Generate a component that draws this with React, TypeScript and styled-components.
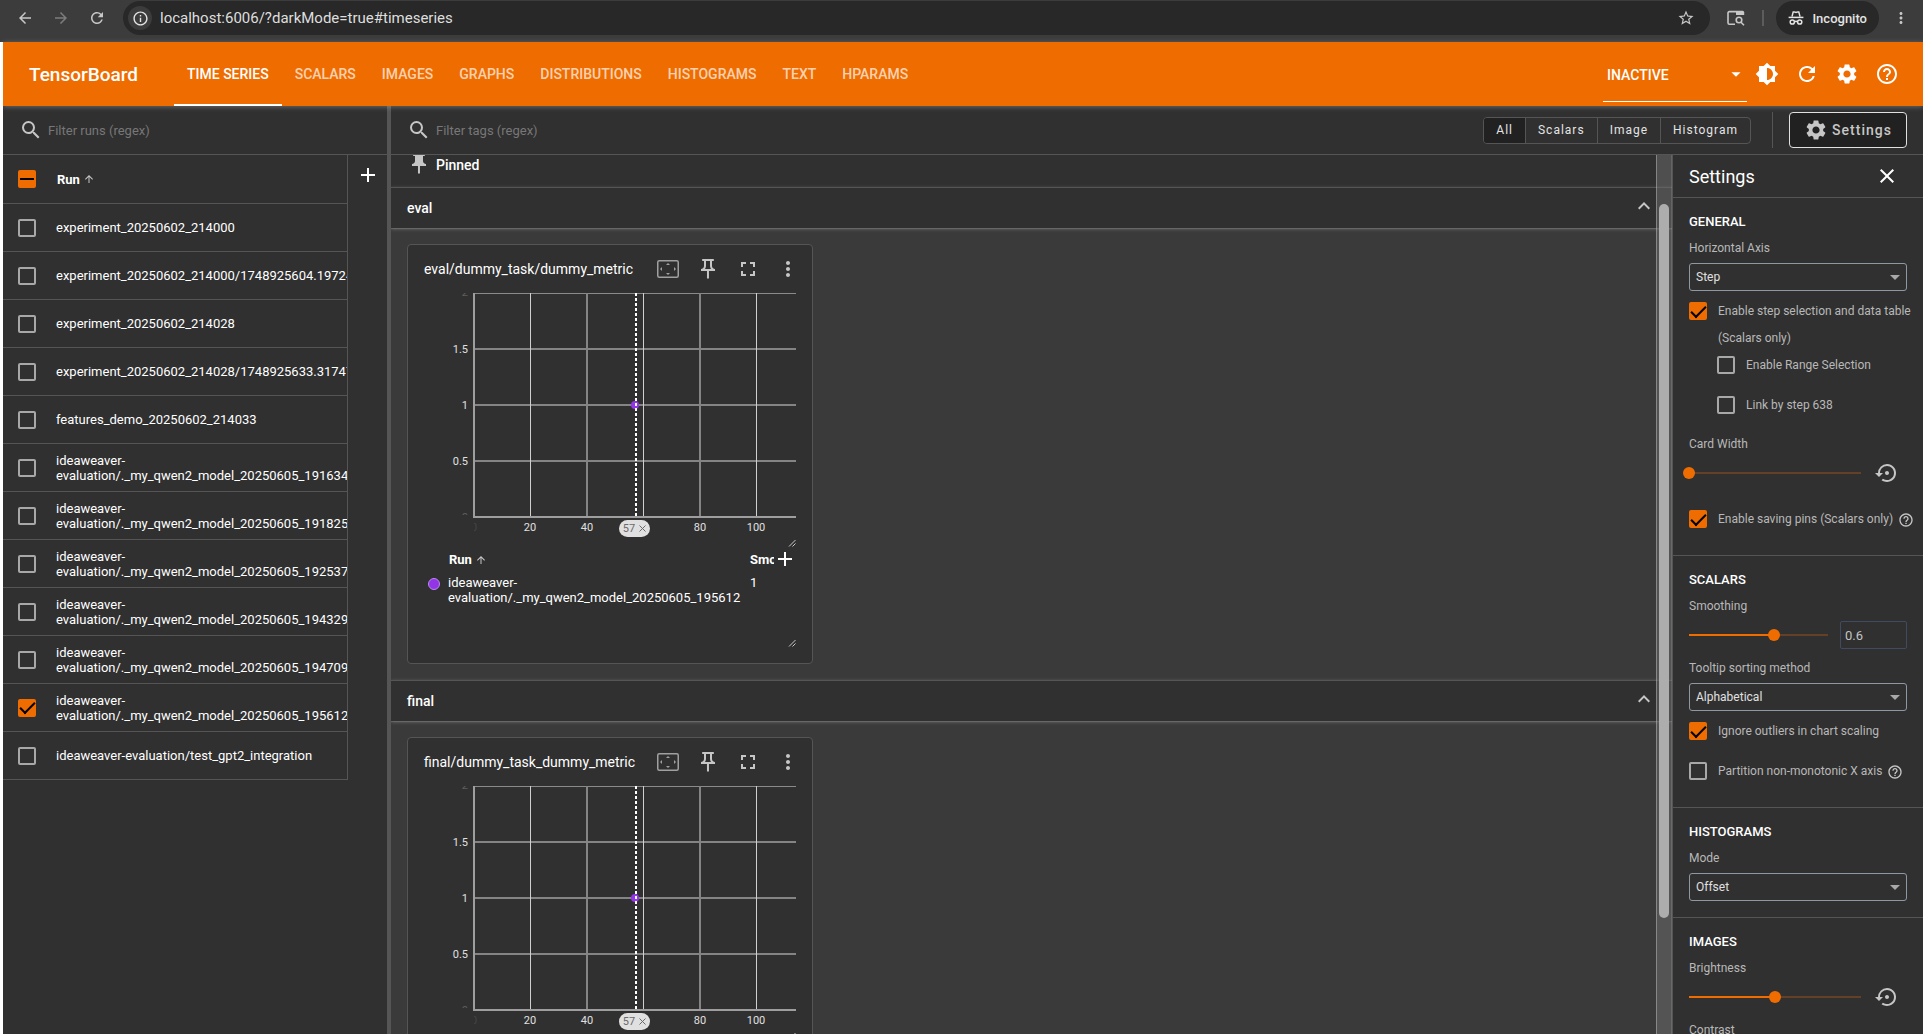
import React, { useEffect, useRef } from "react";
import styled, { createGlobalStyle, css } from "styled-components";
import {
  MdAdd,
  MdArrowBack,
  MdArrowDropDown,
  MdArrowForward,
  MdArrowUpward,
  MdBrightness6,
  MdClose,
  MdExpandLess,
  MdFullscreen,
  MdHelpOutline,
  MdInfoOutline,
  MdMoreVert,
  MdOutlinePushPin,
  MdPushPin,
  MdRefresh,
  MdSearch,
  MdSettings,
  MdSettingsBackupRestore,
  MdStarBorder,
} from "react-icons/md";

const color = {
  orange: "#ef6c00",
  orangeDim: "#634026",
  bg: "#303030",
  content: "#3a3a3a",
  line: "#555555",
  dark: "#212121",
  text: "#ffffff",
  muted: "#b8b8b8",
  icon: "#c6c6c6",
};

const GlobalStyle = createGlobalStyle`
  * { box-sizing: border-box; }
  body {
    margin: 0;
    background: ${color.bg};
    color: ${color.text};
    font-family: Roboto, "Liberation Sans", sans-serif;
    font-size: 13px;
  }
  button, input, select { font-family: inherit; margin: 0; }
`;

const Page = styled.div`
  display: flex;
  flex-direction: column;
  height: 100vh;
  overflow: hidden;
`;

/* ---------- browser bar ---------- */

const BrowserBar = styled.div`
  display: flex;
  align-items: center;
  flex: none;
  height: 42px;
  padding: 0 4px 6px 7px;
  background: #3c3c3c;
`;

const BarButton = styled.button<{ $dim?: boolean }>`
  display: flex;
  align-items: center;
  justify-content: center;
  width: 36px;
  height: 34px;
  padding: 0;
  border: 0;
  background: none;
  color: ${(p) => (p.$dim ? "#7c7c7c" : "#c7c7c7")};
`;

const AddressBox = styled.div`
  display: flex;
  align-items: center;
  flex: 1;
  height: 34px;
  margin: 0 8px;
  padding: 0 15px 0 5px;
  border-radius: 17px;
  background: #282828;
`;

const SiteInfo = styled.button`
  display: flex;
  align-items: center;
  justify-content: center;
  width: 24px;
  height: 24px;
  padding: 0;
  border: 0;
  border-radius: 50%;
  background: #3c3c3c;
  color: #e3e3e3;
`;

const Address = styled.input`
  flex: 1;
  padding: 0 8px;
  border: 0;
  outline: 0;
  background: none;
  color: #dedede;
  font-size: 15px;
`;

const BarRule = styled.span`
  width: 2px;
  height: 16px;
  margin: 0 12px 0 8px;
  background: #5c5c5c;
`;

const IncognitoChip = styled.button`
  display: flex;
  align-items: center;
  gap: 8px;
  height: 34px;
  margin-right: 4px;
  padding: 0 12px;
  border: 0;
  border-radius: 17px;
  background: #282828;
  color: #e3e3e3;
  font-size: 13px;
  font-weight: 500;
`;

/* ---------- app header ---------- */

const Shell = styled.div`
  display: flex;
  flex-direction: column;
  flex: 1;
  min-height: 0;
  border-left: 3px solid #ffffff;
`;

const Header = styled.header`
  position: relative;
  z-index: 2;
  display: flex;
  align-items: center;
  flex: none;
  height: 64px;
  padding: 0 16px 0 26px;
  background: ${color.orange};
  box-shadow: 0 1px 5px rgba(255, 255, 255, 0.28);
`;

const Brand = styled.h1`
  margin: 0 36px 0 0;
  font-size: 19px;
  font-weight: 500;
`;

const Tabs = styled.nav`
  display: flex;
  flex: 1;
  height: 100%;
`;

const Tab = styled.a<{ $active?: boolean }>`
  display: flex;
  align-items: center;
  padding: 0 13px;
  border-top: 2px solid transparent;
  border-bottom: 2px solid ${(p) => (p.$active ? "#ffffff" : "transparent")};
  color: ${(p) => (p.$active ? "#ffffff" : "rgba(255, 255, 255, 0.7)")};
  font-size: 14px;
  font-weight: 500;
  text-decoration: none;
  text-transform: uppercase;
`;

const SelectWrap = styled.div`
  display: grid;
  align-items: center;
  & > * { grid-area: 1 / 1; }
  & > svg { justify-self: end; pointer-events: none; }
`;

const InactiveSelect = styled.select`
  appearance: none;
  width: 144px;
  height: 56px;
  padding: 2px 24px 0 4px;
  border: 0;
  border-bottom: 1px solid #ffffff;
  background: none;
  color: #ffffff;
  font-size: 14px;
  font-weight: 500;
`;

const HeaderSelectWrap = styled(SelectWrap)`
  align-self: flex-end;
  padding-bottom: 4px;
`;

const IconButton = styled.button<{ $tint?: string }>`
  display: flex;
  align-items: center;
  justify-content: center;
  flex: none;
  width: 40px;
  height: 40px;
  padding: 0;
  border: 0;
  background: none;
  color: ${(p) => p.$tint || "#ffffff"};
`;

/* ---------- body ---------- */

const Body = styled.div`
  display: flex;
  flex: 1;
  min-height: 0;
`;

const Sidebar = styled.aside`
  display: flex;
  flex-direction: column;
  flex: none;
  width: 384px;
`;

const Divider = styled.div`
  flex: none;
  width: 4px;
  background: ${color.line};
`;

const FilterBar = styled.div`
  display: flex;
  align-items: center;
  flex: none;
  height: 49px;
  padding: 0 16px;
  border-bottom: 1px solid ${color.line};
  color: ${color.icon};
`;

const FilterInput = styled.input`
  flex: 1;
  min-width: 0;
  padding: 0 5px;
  border: 0;
  outline: 0;
  background: none;
  color: #ffffff;
  font-size: 13px;
  &::placeholder { color: #777777; opacity: 1; }
`;

const SidebarContent = styled.div`
  display: flex;
  align-items: flex-start;
`;

const RunTable = styled.table`
  flex: 1;
  table-layout: fixed;
  width: 0;
  border-collapse: separate;
  border-spacing: 0;
  border-right: 1px solid ${color.line};
  line-height: 15px;
  th, td {
    height: 48px;
    padding: 0;
    border-bottom: 1px solid ${color.line};
    text-align: left;
    overflow: hidden;
  }
  th { height: 49px; }
  th:first-child, td:first-child { width: 53px; padding-left: 15px; }
`;

const AddRunColumn = styled(IconButton)`
  width: 39px;
`;

const SortHead = styled.span`
  display: flex;
  align-items: center;
  gap: 3px;
  padding-left: 1px;
  font-weight: 700;
  svg { color: ${color.icon}; }
`;

const Check = styled.input`
  appearance: none;
  display: grid;
  place-items: center;
  flex: none;
  width: 18px;
  height: 18px;
  margin: 0;
  border: 2px solid #a8a8a8;
  border-radius: 2px;
  &:checked, &:indeterminate {
    border-color: ${color.orange};
    background: ${color.orange};
  }
  &:checked::after {
    content: "";
    width: 13px;
    height: 6px;
    margin-top: -3px;
    border: solid #000000;
    border-width: 0 0 2px 2px;
    transform: rotate(-45deg);
  }
  &:indeterminate::after {
    content: "";
    width: 14px;
    height: 2px;
    margin: 0 -1px;
    background: #000000;
  }
`;

/* ---------- main area ---------- */

const Main = styled.main`
  display: flex;
  flex-direction: column;
  flex: 1;
  min-width: 0;
`;

const ToggleGroup = styled.div`
  display: flex;
  flex: none;
  border: 1px solid ${color.line};
  border-radius: 4px;
  overflow: hidden;
`;

const Toggle = styled.button<{ $on?: boolean }>`
  height: 25px;
  padding: 0 12px;
  border: 0;
  background: ${(p) => (p.$on ? color.dark : "transparent")};
  color: #e4e4e4;
  font-size: 12px;
  letter-spacing: 1px;
  & + & { border-left: 1px solid ${color.line}; }
`;

const BarSeparator = styled.span`
  flex: none;
  width: 1px;
  height: 36px;
  margin: 0 16px 0 21px;
  background: ${color.line};
`;

const SettingsButton = styled.button`
  display: flex;
  align-items: center;
  justify-content: center;
  gap: 4px;
  flex: none;
  width: 118px;
  height: 36px;
  padding: 0;
  border: 1px solid #e0e0e0;
  border-radius: 4px;
  background: ${color.dark};
  color: ${color.icon};
  font-size: 14px;
  font-weight: 500;
  letter-spacing: 1px;
`;

const Split = styled.div`
  display: flex;
  flex: 1;
  min-height: 0;
`;

const CardsPane = styled.div`
  position: relative;
  flex: 1;
  min-width: 0;
  overflow: hidden;
  background: ${color.content};
`;

const PinnedRow = styled.div`
  display: flex;
  align-items: flex-end;
  gap: 5px;
  height: 32px;
  padding: 0 16px 12px;
  background: ${color.bg};
  font-size: 14px;
  font-weight: 500;
  line-height: 20px;
  svg { color: ${color.icon}; margin-bottom: -1px; }
`;

const GroupHeader = styled.button`
  position: relative;
  display: flex;
  align-items: center;
  justify-content: space-between;
  width: 100%;
  height: 41px;
  padding: 0 16px;
  border: 0;
  border-top: 1px solid ${color.line};
  background: ${color.bg};
  box-shadow: 0 1px 1px rgba(255, 255, 255, 0.12), 0 1px 4px rgba(255, 255, 255, 0.22);
  color: #ffffff;
  font-size: 14px;
  font-weight: 500;
  svg { margin-bottom: 4px; color: ${color.icon}; }
`;

const CardGrid = styled.div`
  display: grid;
  grid-template-columns: repeat(auto-fill, minmax(335px, 1fr));
  gap: 16px;
  padding: 16px;
`;

const Card = styled.article`
  padding: 0 16px 16px;
  border: 1px solid ${color.line};
  border-radius: 4px;
  background: ${color.bg};
`;

const CardHead = styled.div`
  display: flex;
  align-items: center;
  height: 48px;
  margin-right: -12px;
`;

const CardTitle = styled.h2`
  flex: 1;
  margin: 0;
  font-size: 14px;
  font-weight: 400;
  white-space: nowrap;
`;

const ChartBox = styled.div`
  position: relative;
  height: 254px;
`;

const ChartSvg = styled.svg`
  display: block;
  width: 100%;
  height: 100%;
  text {
    fill: #e0e0e0;
    font-size: 11px;
  }
`;

const StepPill = styled.button`
  position: absolute;
  left: 195px;
  top: 227px;
  display: flex;
  align-items: center;
  justify-content: center;
  gap: 4px;
  width: 31px;
  height: 17px;
  padding: 0;
  border: 0;
  border-radius: 9px;
  background: #e0e0e0;
  color: #6b6b6b;
  font-size: 11px;
`;

const Grip = styled.svg`
  position: absolute;
  right: 0;
  bottom: 0;
  width: 8px;
  height: 8px;
`;

const DataBox = styled.div`
  position: relative;
  display: flex;
  align-items: flex-start;
  height: 100px;
`;

const DataScroll = styled.div`
  flex: 1;
  min-width: 0;
  overflow: hidden;
`;

const DataTable = styled.table`
  table-layout: fixed;
  width: 400px;
  border-spacing: 0;
  line-height: 15px;
  th, td { padding: 0; text-align: left; vertical-align: top; }
  th { height: 28px; padding-top: 5px; font-weight: 700; }
  th:nth-child(1) { width: 24px; }
  th:nth-child(2) { width: 302px; }
`;

const Swatch = styled.span`
  display: block;
  width: 12px;
  height: 12px;
  margin: 3px 0 0 4px;
  border: 1px solid #b98af0;
  border-radius: 50%;
  background: #9334e6;
`;

const SmallButton = styled.button`
  display: flex;
  align-items: center;
  justify-content: center;
  flex: none;
  width: 22px;
  height: 24px;
  padding: 0;
  border: 0;
  background: none;
  color: #ffffff;
  svg { flex: none; }
`;

const ScrollTrack = styled.div`
  position: absolute;
  top: 0;
  right: 0;
  bottom: 0;
  width: 16px;
  padding: 49px 2px 0;
  border-left: 1px solid rgba(255, 255, 255, 0.3);
  border-right: 1px solid rgba(255, 255, 255, 0.12);
  background: rgba(110, 110, 110, 0.5);
`;

const ScrollThumb = styled.div`
  height: 86%;
  max-height: 714px;
  border-radius: 6px;
  background: #adadad;
`;

/* ---------- settings panel ---------- */

const Panel = styled.aside`
  display: flex;
  flex-direction: column;
  flex: none;
  width: 251px;
  border-left: 1px solid ${color.line};
  overflow: hidden;
`;

const PanelHead = styled.div`
  display: flex;
  align-items: center;
  justify-content: space-between;
  flex: none;
  height: 43px;
  padding: 0 25px 0 16px;
  border-bottom: 1px solid ${color.line};
  h2 {
    margin: 0;
    font-size: 18px;
    font-weight: 400;
  }
`;

const Section = styled.section<{ $roomy?: boolean }>`
  flex: none;
  padding: 16px 16px ${(p) => (p.$roomy ? 22 : 16)}px;
  border-bottom: 1px solid ${color.line};
  h3 {
    margin: 0 0 12px;
    font-size: 13px;
    font-weight: 500;
    line-height: 15px;
  }
`;

const fieldText = css`
  color: ${color.muted};
  font-size: 12px;
`;

const FieldLabel = styled.label<{ $gap?: number }>`
  ${fieldText}
  display: block;
  margin: ${(p) => p.$gap || 0}px 0 8px;
  line-height: 14px;
`;

const FieldSelect = styled.select`
  appearance: none;
  width: 100%;
  height: 28px;
  padding: 0 24px 0 6px;
  border: 1px solid #8e98a3;
  border-radius: 3px;
  background: none;
  color: #e0e0e0;
  font-size: 12px;
`;

const FieldSelectWrap = styled(SelectWrap)`
  & > svg { color: #a8a8a8; }
`;

const CheckRow = styled.div<{ $gap: number; $indent?: boolean }>`
  ${fieldText}
  display: flex;
  align-items: flex-start;
  margin-top: ${(p) => p.$gap}px;
  padding-left: ${(p) => (p.$indent ? 28 : 0)}px;
  line-height: 27px;
  white-space: nowrap;
  ${Check} { margin: 4px 11px 0 0; }
  & > svg { flex: none; margin: 6px 0 0 5px; color: ${color.icon}; }
`;

const SliderRow = styled.div<{ $after?: number }>`
  display: flex;
  align-items: center;
  height: 28px;
  margin-bottom: ${(p) => p.$after || 0}px;
`;

const Range = styled.input`
  appearance: none;
  flex: 1;
  min-width: 0;
  height: 12px;
  margin: 0 -6px;
  background: linear-gradient(
      to right,
      ${color.orange} var(--fill),
      ${color.orangeDim} var(--fill)
    )
    center / calc(100% - 12px) 2px no-repeat;
  &::-webkit-slider-thumb {
    appearance: none;
    width: 12px;
    height: 12px;
    border-radius: 50%;
    background: ${color.orange};
  }
`;

const ResetButton = styled.button`
  display: flex;
  align-items: center;
  justify-content: center;
  flex: none;
  width: 46px;
  height: 28px;
  padding: 0 0 0 6px;
  border: 0;
  background: none;
  color: ${color.icon};
`;

const NumberBox = styled.input`
  flex: none;
  width: 67px;
  height: 28px;
  margin-left: 12px;
  padding: 0 4px;
  border: 1px solid #414b5f;
  border-radius: 2px;
  background: none;
  color: #c4c4c4;
  font-size: 13px;
`;

/* ---------- drawings ---------- */

const IncognitoIcon = () => (
  <svg width="16" height="16" viewBox="0 0 16 16" fill="none" stroke="currentColor" strokeWidth="1.5">
    <path d="M4 6.6 5.2 1.9h1.1L8 2.5l1.7-.6h1.1L12 6.6" />
    <path d="M.6 7.4h14.8" />
    <circle cx="4.3" cy="12" r="2.1" />
    <circle cx="11.7" cy="12" r="2.1" />
    <path d="M6.4 11.8q1.6-1 3.2 0" />
  </svg>
);

const TabSearchIcon = () => (
  <svg width="18" height="16" viewBox="0 0 18 16" fill="none" stroke="currentColor" strokeWidth="1.6">
    <path d="M8 14.2H2.4Q1 14.2 1 12.8V3Q1 1.6 2.4 1.6H9" />
    <path d="M9 .8h6.6q1.6 0 1.6 1.6V5H9z" fill="currentColor" stroke="none" />
    <circle cx="12" cy="10" r="2.8" />
    <path d="m14 12.2 3 3" />
  </svg>
);

const FitIcon = () => (
  <svg width="22" height="18" viewBox="0 0 22 18">
    <rect x="0.75" y="0.75" width="20.5" height="16.5" rx="1.5" fill="none" stroke="#a0a0a0" strokeWidth="1.5" />
    <path d="M9 5h4l-2-2zM9 13h4l-2 2zM5 7v4L3 9zM17 7v4l2-2z" fill="#a0a0a0" />
  </svg>
);

const GripIcon = () => (
  <Grip viewBox="0 0 8 8" stroke="#c8c8c8" strokeWidth="1">
    <path d="M1 7.5 7.5 1M4.5 7.5l3-3" />
  </Grip>
);

/* ---------- components ---------- */

const runs = [
  "experiment_20250602_214000",
  "experiment_20250602_214000/1748925604.19724",
  "experiment_20250602_214028",
  "experiment_20250602_214028/1748925633.31747",
  "features_demo_20250602_214033",
  "ideaweaver-evaluation/._my_qwen2_model_20250605_191634",
  "ideaweaver-evaluation/._my_qwen2_model_20250605_191825",
  "ideaweaver-evaluation/._my_qwen2_model_20250605_192537",
  "ideaweaver-evaluation/._my_qwen2_model_20250605_194329",
  "ideaweaver-evaluation/._my_qwen2_model_20250605_194709",
  "ideaweaver-evaluation/._my_qwen2_model_20250605_195612",
  "ideaweaver-evaluation/test_gpt2_integration",
];
const selectedRun = runs[10];

const tabs = ["Time Series", "Scalars", "Images", "Graphs", "Distributions", "Histograms", "Text", "HParams"];

function SelectAll() {
  const ref = useRef<HTMLInputElement>(null);
  useEffect(() => {
    if (ref.current) ref.current.indeterminate = true;
  }, []);
  return <Check type="checkbox" ref={ref} aria-label="Select all runs" />;
}

function Chart({ id }: { id: string }) {
  const yTicks = [
    { y: 55, label: "1.5" },
    { y: 111, label: "1" },
    { y: 167, label: "0.5" },
  ];
  const xTicks = [
    { x: 106, label: "20", wide: false },
    { x: 162, label: "40", wide: true },
    { x: 219, label: "", wide: false },
    { x: 275, label: "80", wide: true },
    { x: 332, label: "100", wide: false },
  ];
  return (
    <ChartBox>
      <ChartSvg>
        <defs>
          <clipPath id={`${id}-y`}>
            <rect x="0" y="0" width="49" height="222" />
          </clipPath>
          <clipPath id={`${id}-x`}>
            <rect x="50" y="226" width="20" height="20" />
          </clipPath>
        </defs>
        <g clipPath={`url(#${id}-y)`} opacity="0.25">
          <text x="44" y="3" textAnchor="end">2</text>
          <text x="44" y="228" textAnchor="end">0</text>
        </g>
        <g clipPath={`url(#${id}-x)`} opacity="0.1">
          <text x="50" y="238" textAnchor="middle">0</text>
        </g>
        <rect x="49" y="0" width="323" height="1" fill="#8a8a8a" />
        {yTicks.map((t) => (
          <g key={t.y}>
            <rect x="49" y={t.y} width="323" height="2" fill="#848484" />
            <text x="44" y={t.y + 5} textAnchor="end">{t.label}</text>
          </g>
        ))}
        {xTicks.map((t) => (
          <g key={t.x}>
            <rect x={t.x} y="0" width={t.wide ? 2 : 1} height="224" fill={t.wide ? "#848484" : "#cfcfcf"} />
            {t.label && (
              <text x={t.x + (t.wide ? 1 : 0)} y="238" textAnchor="middle">{t.label}</text>
            )}
          </g>
        ))}
        <rect x="49" y="0" width="2" height="225" fill="#9e9e9e" />
        <rect x="49" y="223" width="323" height="2" fill="#9e9e9e" />
        <circle cx="211" cy="112" r="4" fill="#9334e6" />
        <path d="M212 0V224" stroke="#ffffff" strokeWidth="2" strokeDasharray="3 2" />
      </ChartSvg>
      <StepPill aria-label="Remove step 57">
        57
        <svg width="7" height="7" viewBox="0 0 7 7" stroke="currentColor">
          <path d="m.5.5 6 6m0-6-6 6" />
        </svg>
      </StepPill>
      <GripIcon />
    </ChartBox>
  );
}

function ScalarCard({ id, title }: { id: string; title: string }) {
  return (
    <Card>
      <CardHead>
        <CardTitle>{title}</CardTitle>
        <IconButton aria-label="Fit domain to data"><FitIcon /></IconButton>
        <IconButton aria-label="Pin card" $tint={color.icon}><MdOutlinePushPin size={24} /></IconButton>
        <IconButton aria-label="Full size" $tint={color.icon}><MdFullscreen size={24} /></IconButton>
        <IconButton aria-label="More options" $tint={color.icon}><MdMoreVert size={24} /></IconButton>
      </CardHead>
      <Chart id={id} />
      <DataBox>
        <DataScroll>
          <DataTable>
            <thead>
              <tr>
                <th />
                <th><SortHead>Run <MdArrowUpward size={12} /></SortHead></th>
                <th>Smoothed</th>
              </tr>
            </thead>
            <tbody>
              <tr>
                <td><Swatch /></td>
                <td>{selectedRun}</td>
                <td>1</td>
              </tr>
            </tbody>
          </DataTable>
        </DataScroll>
        <SmallButton aria-label="Add column"><MdAdd size={24} /></SmallButton>
        <GripIcon />
      </DataBox>
    </Card>
  );
}

function Group({ name, card }: { name: string; card: string }) {
  return (
    <section>
      <GroupHeader>
        {name}
        <MdExpandLess size={24} />
      </GroupHeader>
      <CardGrid>
        <ScalarCard id={name} title={card} />
      </CardGrid>
    </section>
  );
}

function CheckField(props: {
  id: string;
  gap: number;
  indent?: boolean;
  on?: boolean;
  help?: boolean;
  children: React.ReactNode;
}) {
  return (
    <CheckRow $gap={props.gap} $indent={props.indent}>
      <Check type="checkbox" id={props.id} defaultChecked={props.on} />
      <label htmlFor={props.id}>{props.children}</label>
      {props.help && <MdHelpOutline size={16} />}
    </CheckRow>
  );
}

function SelectField(props: { id: string; label: string; value: string; gap?: number }) {
  return (
    <>
      <FieldLabel htmlFor={props.id} $gap={props.gap}>{props.label}</FieldLabel>
      <FieldSelectWrap>
        <FieldSelect id={props.id}>
          <option>{props.value}</option>
        </FieldSelect>
        <MdArrowDropDown size={24} />
      </FieldSelectWrap>
    </>
  );
}

function Slider({ id, fill }: { id: string; fill: number }) {
  return (
    <Range
      id={id}
      type="range"
      min={0}
      max={100}
      defaultValue={fill}
      style={{ "--fill": `${fill}%` } as React.CSSProperties}
    />
  );
}

function ResetSlider({ id, fill, after }: { id: string; fill: number; after: number }) {
  return (
    <SliderRow $after={after}>
      <Slider id={id} fill={fill} />
      <ResetButton aria-label="Reset"><MdSettingsBackupRestore size={24} /></ResetButton>
    </SliderRow>
  );
}

function SettingsPanel() {
  return (
    <Panel>
      <PanelHead>
        <h2>Settings</h2>
        <SmallButton aria-label="Close settings"><MdClose size={24} /></SmallButton>
      </PanelHead>
      <Section $roomy>
        <h3>GENERAL</h3>
        <SelectField id="axis" label="Horizontal Axis" value="Step" />
        <CheckField id="step" gap={7} on>
          Enable step selection and data table
          <br />
          (Scalars only)
        </CheckField>
        <CheckField id="range" gap={0} indent>Enable Range Selection</CheckField>
        <CheckField id="link" gap={13} indent>Link by step 638</CheckField>
        <FieldLabel htmlFor="card-width" $gap={18}>Card Width</FieldLabel>
        <ResetSlider id="card-width" fill={0} after={19} />
        <CheckField id="pins" gap={0} on help>Enable saving pins (Scalars only)</CheckField>
      </Section>
      <Section $roomy>
        <h3>SCALARS</h3>
        <FieldLabel htmlFor="smoothing">Smoothing</FieldLabel>
        <SliderRow>
          <Slider id="smoothing" fill={61} />
          <NumberBox aria-label="Smoothing value" defaultValue="0.6" />
        </SliderRow>
        <SelectField id="sorting" label="Tooltip sorting method" value="Alphabetical" gap={12} />
        <CheckField id="outliers" gap={7} on>Ignore outliers in chart scaling</CheckField>
        <CheckField id="partition" gap={13} help>Partition non-monotonic X axis</CheckField>
      </Section>
      <Section>
        <h3>HISTOGRAMS</h3>
        <SelectField id="mode" label="Mode" value="Offset" />
      </Section>
      <Section>
        <h3>IMAGES</h3>
        <FieldLabel htmlFor="brightness">Brightness</FieldLabel>
        <ResetSlider id="brightness" fill={50} after={12} />
        <FieldLabel htmlFor="contrast">Contrast</FieldLabel>
        <ResetSlider id="contrast" fill={50} after={12} />
      </Section>
    </Panel>
  );
}

export default function App() {
  return (
    <Page>
      <GlobalStyle />
      <BrowserBar>
        <BarButton aria-label="Back"><MdArrowBack size={18} /></BarButton>
        <BarButton aria-label="Forward" $dim><MdArrowForward size={18} /></BarButton>
        <BarButton aria-label="Reload"><MdRefresh size={18} /></BarButton>
        <AddressBox>
          <SiteInfo aria-label="Site information"><MdInfoOutline size={17} /></SiteInfo>
          <Address aria-label="Address" defaultValue="localhost:6006/?darkMode=true#timeseries" />
          <MdStarBorder size={18} color="#c7c7c7" />
        </AddressBox>
        <BarButton aria-label="Search tabs"><TabSearchIcon /></BarButton>
        <BarRule />
        <IncognitoChip><IncognitoIcon />Incognito</IncognitoChip>
        <BarButton aria-label="Browser menu"><MdMoreVert size={18} /></BarButton>
      </BrowserBar>
      <Shell>
        <Header>
          <Brand>TensorBoard</Brand>
          <Tabs>
            {tabs.map((t, i) => (
              <Tab key={t} href={`#${t}`} $active={i === 0}>{t}</Tab>
            ))}
          </Tabs>
          <HeaderSelectWrap>
            <InactiveSelect aria-label="Inactive dashboards">
              <option>INACTIVE</option>
            </InactiveSelect>
            <MdArrowDropDown size={22} />
          </HeaderSelectWrap>
          <IconButton aria-label="Toggle theme"><MdBrightness6 size={24} /></IconButton>
          <IconButton aria-label="Reload data"><MdRefresh size={24} /></IconButton>
          <IconButton aria-label="Open settings"><MdSettings size={24} /></IconButton>
          <IconButton aria-label="Help"><MdHelpOutline size={24} /></IconButton>
        </Header>
        <Body>
          <Sidebar>
            <FilterBar>
              <MdSearch size={24} />
              <FilterInput aria-label="Filter runs" placeholder="Filter runs (regex)" />
            </FilterBar>
            <SidebarContent>
              <RunTable>
                <thead>
                  <tr>
                    <th><SelectAll /></th>
                    <th><SortHead>Run <MdArrowUpward size={12} /></SortHead></th>
                  </tr>
                </thead>
                <tbody>
                  {runs.map((run) => (
                    <tr key={run}>
                      <td><Check type="checkbox" aria-label={run} defaultChecked={run === selectedRun} /></td>
                      <td>{run}</td>
                    </tr>
                  ))}
                </tbody>
              </RunTable>
              <AddRunColumn aria-label="Add column"><MdAdd size={24} /></AddRunColumn>
            </SidebarContent>
          </Sidebar>
          <Divider />
          <Main>
            <FilterBar>
              <MdSearch size={24} />
              <FilterInput aria-label="Filter tags" placeholder="Filter tags (regex)" />
              <ToggleGroup>
                <Toggle $on>All</Toggle>
                <Toggle>Scalars</Toggle>
                <Toggle>Image</Toggle>
                <Toggle>Histogram</Toggle>
              </ToggleGroup>
              <BarSeparator />
              <SettingsButton><MdSettings size={24} />Settings</SettingsButton>
            </FilterBar>
            <Split>
              <CardsPane>
                <PinnedRow><MdPushPin size={24} />Pinned</PinnedRow>
                <Group name="eval" card="eval/dummy_task/dummy_metric" />
                <Group name="final" card="final/dummy_task_dummy_metric" />
                <ScrollTrack><ScrollThumb /></ScrollTrack>
              </CardsPane>
              <SettingsPanel />
            </Split>
          </Main>
        </Body>
      </Shell>
    </Page>
  );
}
